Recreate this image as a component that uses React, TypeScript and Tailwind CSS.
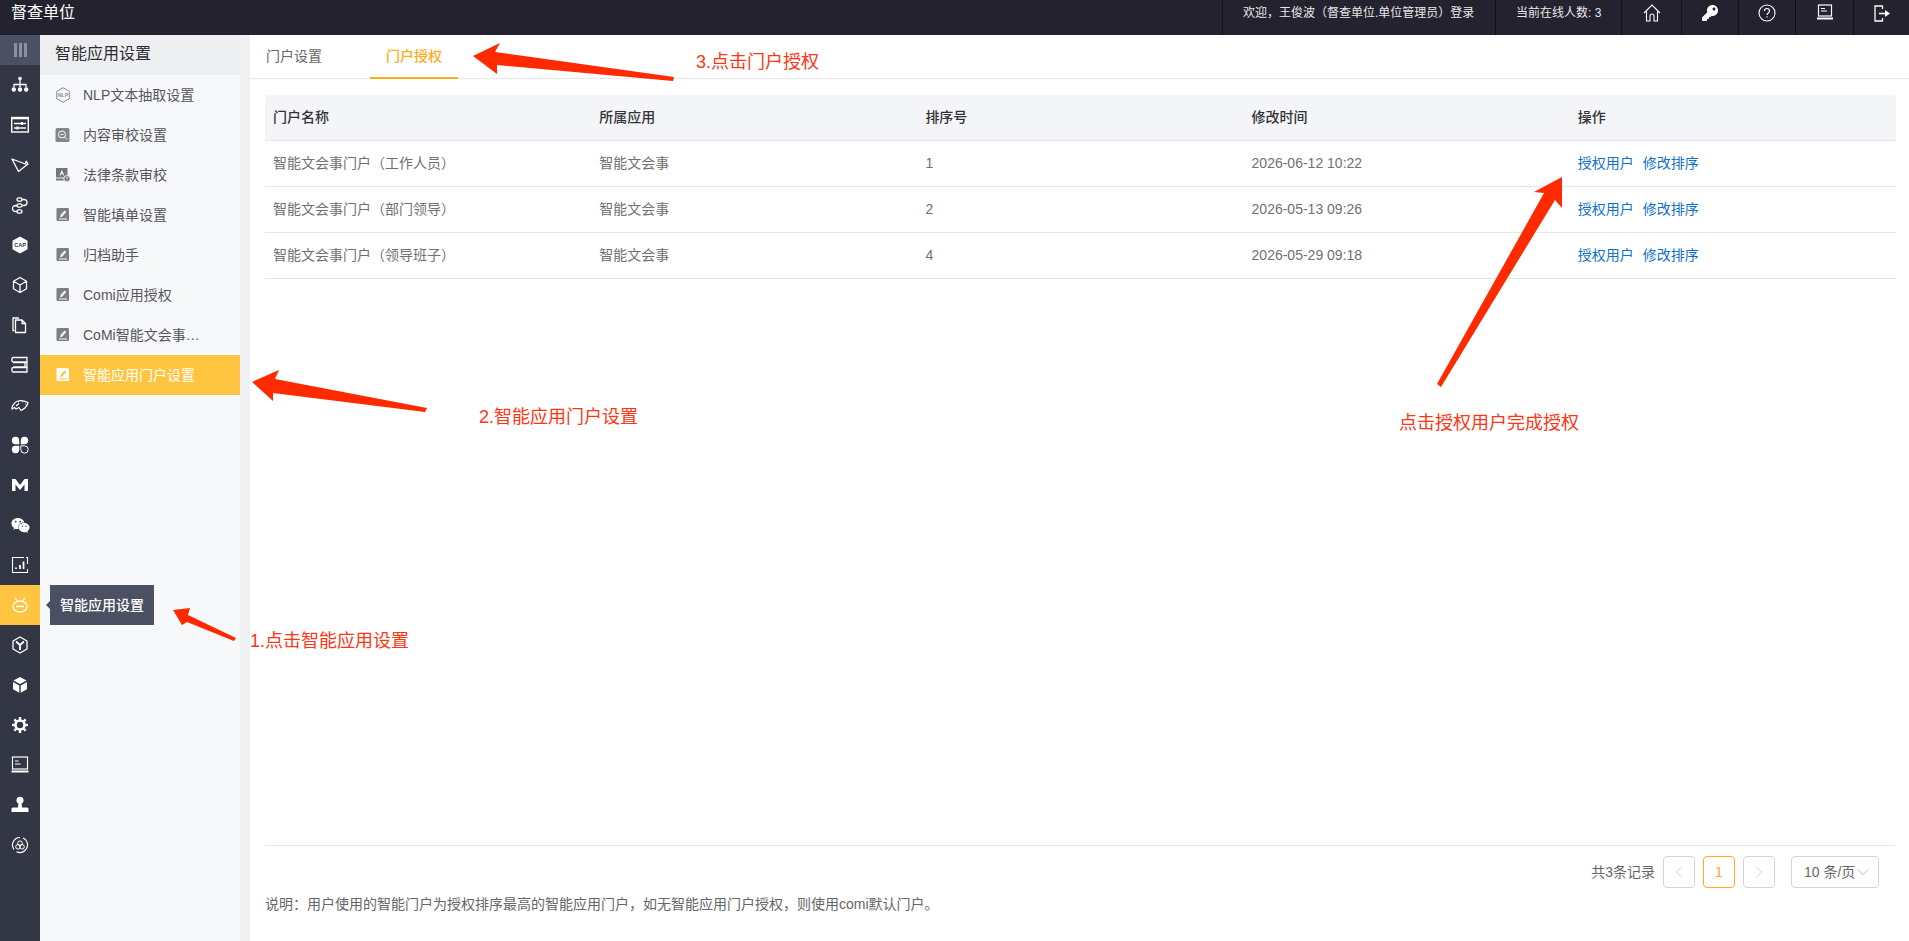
import type { ReactNode } from "react";
import { ChevronDown, ChevronLeft, ChevronRight } from "lucide-react";
import { FaKey, FaWeixin } from "react-icons/fa";

const ICON_PROPS = {
	width: 18,
	height: 18,
	viewBox: "0 0 18 18",
	fill: "none",
	stroke: "currentColor",
	strokeWidth: 1.3,
};

function Svg({ children }: { children: ReactNode }) {
	return <svg {...ICON_PROPS}>{children}</svg>;
}

const railIcons: ReactNode[] = [
	<Svg key="org">
		<circle cx="9" cy="2.5" r="1.8" fill="currentColor" stroke="none" />
		<path d="M9 4v4.5M3 11V8.500h12V11M9 8.500V11" />
		<circle cx="2.800" cy="13.500" r="2.200" fill="currentColor" stroke="none" />
		<circle cx="9" cy="13.500" r="2.200" fill="currentColor" stroke="none" />
		<circle cx="15.200" cy="13.500" r="2.200" fill="currentColor" stroke="none" />
	</Svg>,
	<Svg key="sliders">
		<rect x="0.700" y="1.500" width="16.600" height="14.500" strokeWidth="1.400" />
		<path d="M0.700 2.200h16.600" strokeWidth="2.200" />
		<path d="M3 7.500h12M3 12h12" />
		<rect x="10" y="6" width="2" height="3" fill="currentColor" stroke="none" />
		<rect x="5.500" y="10.500" width="2" height="3" fill="currentColor" stroke="none" />
	</Svg>,
	<Svg key="plane">
		<path d="M1 3l6.500 12.500L17 8l-1.800-2.800-.8 2.800z" strokeLinejoin="round" />
	</Svg>,
	<Svg key="route">
		<path d="M7 3.500h6a3 3 0 0 1 3 3c0 1.800-1.300 3-3 3H5c-2 0-3.500 1.200-3.500 3s1.500 3 3.500 3h6" />
		<rect x="6" y="1.800" width="5" height="3.400" rx="1.700" fill="#333745" />
		<rect x="6" y="7.800" width="5" height="3.400" rx="1.700" fill="#333745" />
		<rect x="6" y="13.800" width="5" height="3.400" rx="1.700" fill="#333745" />
	</Svg>,
	<svg key="cap" width="18" height="18" viewBox="0 0 18 18">
		<path d="M9 .5l7.500 4.200v8.600L9 17.500l-7.500-4.200V4.700z" fill="currentColor" />
		<text
			x="9"
			y="11"
			textAnchor="middle"
			fontSize="5.500"
			fontWeight="700"
			fill="#333745"
			fontFamily="'Liberation Sans', sans-serif"
		>
			CAP
		</text>
	</svg>,
	<Svg key="box">
		<path d="M9 1.500l6.500 3.700v7.600L9 16.500l-6.500-3.700V5.200zM2.500 5.200L9 9l6.500-3.800M9 9v7.500" strokeLinejoin="round" />
	</Svg>,
	<Svg key="files">
		<path d="M3.500 14.500H2V2h6" />
		<path d="M4.500 4H11l3.500 3.500v9h-10zM11 4v3.500h3.500" strokeLinejoin="round" />
	</Svg>,
	<Svg key="stack">
		<path d="M2 1.500h14v4.500H2c-1.500 0-1.500-4.500 0-4.500zM2 6.500h14v4.500H2M2 11.500h14V16H2c-1.500 0-1.500-4.500 0-4.500zM14 6v5" />
	</Svg>,
	<Svg key="gauge">
		<path d="M1 11.500C3 5.500 8 2.500 17 6.500c-1 3.500-3.500 6.500-7 8l-2-3-3 1.500-1.500-1.500L1 13z" strokeLinejoin="round" />
		<path d="M5 10l3-2.500M7 6h.5M11 6h.5M14 8h.5" />
	</Svg>,
	<svg key="clover" width="18" height="18" viewBox="0 0 18 18" fill="currentColor">
		<path d="M8.200 8.200H4.500a3.700 3.700 0 1 1 3.700-3.700zM9.800 8.200V4.500a3.700 3.700 0 1 1 3.700 3.700zM8.200 9.800v3.700a3.700 3.700 0 1 1-3.700-3.700z" />
		<path d="M9.800 9.800h3.700a3.700 3.700 0 1 1-3.700 3.700z" fill="none" stroke="currentColor" strokeWidth="1" />
	</svg>,
	<svg key="m" width="18" height="18" viewBox="0 0 18 18" fill="currentColor">
		<path d="M1 3h3.500L9 9l4.500-6H17v12h-3.500V8.500L9 14 4.500 8.500V15H1z" />
	</svg>,
	<FaWeixin key="wx" size={19} />,
	<svg key="chart" width="18" height="18" viewBox="0 0 18 18" fill="none" stroke="currentColor">
		<path d="M13 1.500H1.500v15H16.500V13M16.500 8V1.500H15" strokeWidth="1.100" />
		<path d="M5 13v-1.500M9 13V9M12.500 13V5.500" strokeWidth="1.800" />
	</svg>,
	<svg key="bot" width="18" height="18" viewBox="0 0 18 18" fill="none" stroke="currentColor" strokeWidth="1.300">
		<ellipse cx="9" cy="10.500" rx="7" ry="5.500" />
		<path d="M5 10.500h8M6 5L4.500 2.500M12 5l1.500-2.500" />
		<circle cx="4.300" cy="2" r=".8" fill="currentColor" stroke="none" />
		<circle cx="13.700" cy="2" r=".8" fill="currentColor" stroke="none" />
	</svg>,
	<Svg key="hex">
		<path d="M9 1l7 4v8l-7 4-7-4V5z" strokeLinejoin="round" />
		<path d="M9 9L5 5.500M9 9l4-3.500M9 9v5" strokeWidth="1.800" />
	</Svg>,
	<svg key="cube" width="18" height="18" viewBox="0 0 18 18" fill="currentColor">
		<path d="M9 1l6.500 3.500L9 8 2.500 4.500zM2 6l6.300 3.400v7.400L2 13.300zM16 6L9.700 9.400v7.400l6.300-3.500z" />
	</svg>,
	<svg key="gear" width="18" height="18" viewBox="0 0 18 18" fill="none" stroke="currentColor">
		<circle cx="9" cy="9" r="4.500" strokeWidth="2.600" />
		<path d="M9 1v3M9 14v3M1 9h3M14 9h3M3.300 3.300l2.200 2.200M12.500 12.500l2.200 2.200M14.700 3.300l-2.200 2.200M5.500 12.500l-2.200 2.200" strokeWidth="2.400" />
	</svg>,
	<svg key="laptop" width="18" height="18" viewBox="0 0 18 18" fill="none" stroke="currentColor">
		<rect x="1.500" y="1" width="15" height="12" strokeWidth="1.200" />
		<path d="M4 5h3.500M4 8h5.500" strokeWidth="1.200" />
		<path d="M.5 15.500h17" strokeWidth="2" />
	</svg>,
	<svg key="stamp" width="18" height="18" viewBox="0 0 18 18" fill="currentColor">
		<circle cx="9" cy="4.300" r="3.500" />
		<path d="M7.500 7h3l.5 4.500h5a1.500 1.500 0 0 1 1.500 1.500v3H.500v-3A1.500 1.500 0 0 1 2 11.500h5z" />
	</svg>,
	<svg key="cycle" width="18" height="18" viewBox="0 0 18 18" fill="none" stroke="currentColor" strokeWidth="1">
		<path d="M3 13.500A7.500 7.500 0 0 1 9 1.500M12 2a7.500 7.500 0 0 1 2 12.500A7.500 7.500 0 0 1 5.500 15.800" strokeWidth="1.200" />
		<circle cx="9" cy="7.200" r="2.300" />
		<circle cx="7" cy="10.800" r="2.300" />
		<circle cx="11" cy="10.800" r="2.300" />
	</svg>,
];

const ACTIVE_RAIL = 13;

function NlpIcon() {
	return (
		<svg width="16" height="16" viewBox="0 0 16 16" fill="none" stroke="#8b8b92" strokeWidth="1">
			<path d="M8 .7l6.300 3.600v7.400L8 15.300l-6.300-3.600V4.300z" />
			<text
				x="8"
				y="9.800"
				textAnchor="middle"
				fontSize="5"
				fontWeight="700"
				stroke="none"
				fill="#8b8b92"
				fontFamily="'Liberation Sans', sans-serif"
			>
				NLP
			</text>
		</svg>
	);
}

function ReviewIcon() {
	return (
		<svg width="16" height="16" viewBox="0 0 16 16" fill="none">
			<rect x=".5" y="1" width="14" height="14" rx="1.500" fill="#85858c" />
			<circle cx="7" cy="7.500" r="3.500" stroke="#f7f8fa" strokeWidth="1" />
			<path d="M9.500 10l2.500 2.500M5.500 7.500h3" stroke="#f7f8fa" strokeWidth="1" />
		</svg>
	);
}

function LawIcon() {
	return (
		<svg width="16" height="16" viewBox="0 0 16 16">
			<rect x="1" y="1" width="11.500" height="12.500" fill="#75757c" />
			<path d="M6.800 3L4.500 8.500h1l.5-1.200h1.800l.5 1.200h1zM1 10.500h8v1H1z" fill="#f7f8fa" />
			<circle cx="12" cy="11.800" r="3.200" fill="#75757c" stroke="#f7f8fa" />
			<path d="M12 10v2.200M12 13v.6" stroke="#f7f8fa" />
		</svg>
	);
}

function EditIcon({ active }: { active?: boolean }) {
	const bg = active ? "#ffffff" : "#7e7e85";
	const fg = active ? "#ffc440" : "#f7f8fa";
	return (
		<svg width="16" height="16" viewBox="0 0 16 16">
			<rect x="1.500" y="1" width="12.500" height="13" rx="1.200" fill={bg} />
			<path d="M9.500 3.500l1.800 1.500-4 4.500-2.300.8.500-2.300zM4 11.500h8v1H4z" fill={fg} />
		</svg>
	);
}

const menuItems: { label: string; icon: ReactNode; active?: boolean }[] = [
	{ label: "NLP文本抽取设置", icon: <NlpIcon /> },
	{ label: "内容审校设置", icon: <ReviewIcon /> },
	{ label: "法律条款审校", icon: <LawIcon /> },
	{ label: "智能填单设置", icon: <EditIcon /> },
	{ label: "归档助手", icon: <EditIcon /> },
	{ label: "Comi应用授权", icon: <EditIcon /> },
	{ label: "CoMi智能文会事…", icon: <EditIcon /> },
	{ label: "智能应用门户设置", icon: <EditIcon active />, active: true },
];

const rows = [
	{ name: "智能文会事门户（工作人员）", order: 1, time: "2026-06-12 10:22" },
	{ name: "智能文会事门户（部门领导）", order: 2, time: "2026-05-13 09:26" },
	{ name: "智能文会事门户（领导班子）", order: 4, time: "2026-05-29 09:18" },
];

function TopBar() {
	return (
		<header className="flex h-[35px] shrink-0 bg-[#23222e] text-white">
			<div className="flex-1 pl-[11px] pt-[2px] text-base leading-[22px]">督查单位</div>
			<div className="flex border-l border-[#0f0f14] text-xs leading-[26px] text-[#e8e8ea]">
				<div className="w-[272px] pl-[20px]">欢迎，王俊波（督查单位.单位管理员）登录</div>
				<div className="w-[126px] border-l border-[#0f0f14] pl-[20px]">当前在线人数: 3</div>
			</div>
			<div className="flex text-white">
				<div className="flex w-[60px] justify-center border-l border-[#0f0f14] pt-[4px]">
					<svg width="18" height="18" viewBox="0 0 18 18" fill="none" stroke="currentColor" strokeWidth="1.100">
						<path d="M1 9l8-8 8 8M3.500 7.500V17H7v-5a2 2 0 0 1 4 0v5h3.500V7.500" />
					</svg>
				</div>
				<div className="flex w-[57px] justify-center border-l border-[#0f0f14] pt-[5px]">
					<FaKey size={16} />
				</div>
				<div className="flex w-[57px] justify-center border-l border-[#0f0f14] pt-[4px]">
					<svg width="18" height="18" viewBox="0 0 18 18" fill="none" stroke="currentColor" strokeWidth="1.100">
						<circle cx="9" cy="9" r="8" />
						<path d="M6.500 7c0-3.300 5-3.300 5 0 0 2-2.500 2-2.500 4M9 12.300v1.300" />
					</svg>
				</div>
				<div className="flex w-[58px] justify-center border-l border-[#0f0f14] pt-[4px]">
					<svg width="18" height="18" viewBox="0 0 18 18" fill="none" stroke="currentColor">
						<rect x="2.500" y="1" width="13" height="11" strokeWidth="1.200" />
						<path d="M5 4.500h4M5 7h6" strokeWidth="1" />
						<path d="M1 14.500h16" strokeWidth="2" />
					</svg>
				</div>
				<div className="flex w-[56px] justify-center border-l border-[#0f0f14] pt-[5px]">
					<svg width="18" height="17" viewBox="0 0 18 17" fill="none" stroke="currentColor" strokeWidth="1.300">
						<path d="M9.500 4V1H2v15h7.500v-3" />
						<path d="M6 8.500h7" strokeWidth="1.600" />
						<path d="M12 5l5 3.500-5 3.500z" fill="currentColor" stroke="none" />
					</svg>
				</div>
			</div>
		</header>
	);
}

function Rail() {
	return (
		<nav className="flex w-[40px] shrink-0 flex-col bg-[#333745] text-white">
			<div className="flex h-[30px] items-center justify-center gap-[2px] bg-[#4b5063]">
				<span className="h-[14px] w-[3px] bg-[#8d90a0]" />
				<span className="h-[14px] w-[3px] bg-[#8d90a0]" />
				<span className="h-[14px] w-[3px] bg-[#8d90a0]" />
			</div>
			{railIcons.map((icon, i) => (
				<div
					key={i}
					className={
						i === ACTIVE_RAIL
							? "relative flex h-[40px] items-center justify-center bg-[#ffc440]"
							: "flex h-[40px] items-center justify-center"
					}
				>
					{icon}
					{i === ACTIVE_RAIL && (
						<div className="absolute left-[50px] top-0 z-10 flex h-[40px] w-[104px] items-center justify-center whitespace-nowrap bg-[#4b5063] text-sm font-medium">
							<span className="absolute left-[-4px] top-[16px] h-0 w-0 border-y-4 border-r-4 border-y-transparent border-r-[#4b5063]" />
							智能应用设置
						</div>
					)}
				</div>
			))}
		</nav>
	);
}

function SubMenu() {
	return (
		<aside className="flex w-[210px] shrink-0 border-r-[10px] border-[#eff0f2] bg-[#f7f8fa]">
			<div className="w-full">
				<div className="h-[40px] bg-[#eeeff1] pl-[15px] text-base leading-[38px] text-[#2b2b33]">智能应用设置</div>
				{menuItems.map((item) => (
					<div
						key={item.label}
						className={
							item.active
								? "flex h-[40px] items-center gap-[12px] bg-[#ffc440] pl-[15px] text-sm text-white"
								: "flex h-[40px] items-center gap-[12px] pl-[15px] text-sm text-[#55555d]"
						}
					>
						<span className="flex w-[16px] justify-center">{item.icon}</span>
						{item.label}
					</div>
				))}
			</div>
		</aside>
	);
}

function PageButton({ children, active }: { children: ReactNode; active?: boolean }) {
	return (
		<div
			className={
				active
					? "flex h-[32px] w-[32px] items-center justify-center rounded border border-[#ffab1a] text-sm text-[#ff9f40]"
					: "flex h-[32px] w-[32px] items-center justify-center rounded border border-[#d4d4d4] text-[#c4c4c4]"
			}
		>
			{children}
		</div>
	);
}

function Content() {
	return (
		<main className="flex min-w-0 flex-1 flex-col bg-white">
			<div className="flex h-[44px] shrink-0 gap-[32px] border-b border-[#e8e8e8] text-sm leading-[43px]">
				<div className="w-[88px] px-4 text-[#666666]">门户设置</div>
				<div className="-mb-px h-[44px] w-[88px] border-b-2 border-[#ffab1a] px-4 font-medium text-[#ffab1a]">门户授权</div>
			</div>
			<div className="flex-1 pl-[15px] pr-[13px] pt-[16px]">
				<table className="w-full table-fixed border-collapse text-left text-sm">
					<thead>
						<tr className="h-[45px] border-b border-[#e5e5e5] bg-[#f4f5f9] text-[#333333]">
							<th className="rounded-tl px-2 font-medium">门户名称</th>
							<th className="px-2 font-medium">所属应用</th>
							<th className="px-2 font-medium">排序号</th>
							<th className="px-2 font-medium">修改时间</th>
							<th className="rounded-tr px-2 font-medium">操作</th>
						</tr>
					</thead>
					<tbody className="text-[#707070]">
						{rows.map((row) => (
							<tr key={row.name} className="h-[46px] border-b border-[#e5e5e5]">
								<td className="px-2">{row.name}</td>
								<td className="px-2">智能文会事</td>
								<td className="px-2">{row.order}</td>
								<td className="px-2">{row.time}</td>
								<td className="px-2 text-[#0f72c8]">
									<span className="mr-[9px]">授权用户</span>
									<span>修改排序</span>
								</td>
							</tr>
						))}
					</tbody>
				</table>
			</div>
			<div className="mx-[15px] mr-[14px] h-[96px] shrink-0 border-t border-[#e5e5e5]">
				<div className="flex items-center justify-end pr-[16px] pt-[10px] text-sm text-[#666666]">
					<span className="mr-[8px]">共3条记录</span>
					<PageButton>
						<ChevronLeft size={20} strokeWidth={1} />
					</PageButton>
					<div className="mx-[8px]">
						<PageButton active>1</PageButton>
					</div>
					<PageButton>
						<ChevronRight size={20} strokeWidth={1} />
					</PageButton>
					<div className="ml-[16px] flex h-[32px] w-[88px] items-center rounded border border-[#d4d4d4] pl-[12px]">
						<span className="whitespace-nowrap">10 条/页</span>
						<ChevronDown size={20} strokeWidth={1} className="-ml-[2px] shrink-0 text-[#b0b0b0]" />
					</div>
				</div>
				<p className="mt-[5px] text-sm leading-[22px] text-[#666666]">
					说明：用户使用的智能门户为授权排序最高的智能应用门户，如无智能应用门户授权，则使用comi默认门户。
				</p>
			</div>
		</main>
	);
}

// red annotations pasted over the screenshot
function Annotations() {
	return (
		<div className="pointer-events-none absolute inset-0 z-20 text-lg leading-[24px] text-[#ff3513]">
			<svg className="absolute left-0 top-0" width="1909" height="941" fill="#ff2a00">
				<polygon points="173,610 190,608 188,615 236,638 234,641 187,622 182,625" />
				<polygon points="252,382 279,370 275,379 427,408 425,412 273,393 273,401" />
				<polygon points="473,56 500,43 495,52 674,77 673,81 497,65 497,74" />
				<polygon points="1562,177 1534,192 1544,193 1437,384 1441,387 1555,200 1562,208" />
			</svg>
			<span className="absolute left-[250px] top-[629px]">1.点击智能应用设置</span>
			<span className="absolute left-[479px] top-[405px]">2.智能应用门户设置</span>
			<span className="absolute left-[696px] top-[50px]">3.点击门户授权</span>
			<span className="absolute left-[1399px] top-[411px]">点击授权用户完成授权</span>
		</div>
	);
}

export default function App() {
	return (
		<div className="relative flex h-screen flex-col overflow-hidden font-['Liberation_Sans','Noto_Sans_CJK_SC',sans-serif]">
			<TopBar />
			<div className="flex min-h-0 flex-1">
				<Rail />
				<SubMenu />
				<Content />
			</div>
			<Annotations />
		</div>
	);
}
